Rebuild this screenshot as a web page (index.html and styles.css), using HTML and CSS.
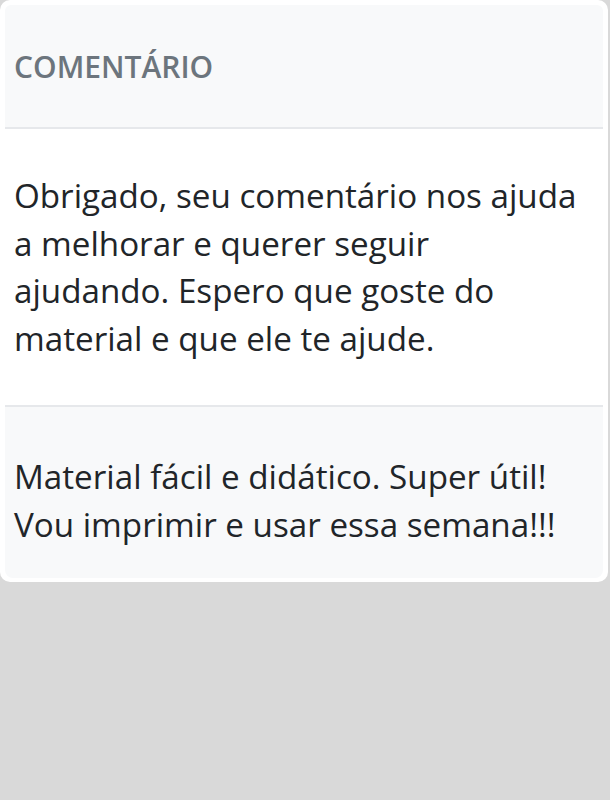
FILE: index.html
```html
<!DOCTYPE html>
<html lang="pt-BR">
<head>
<meta charset="utf-8">
<title>Comentários</title>
<link rel="stylesheet" href="styles.css">
</head>
<body>
  <section class="card">
    <div class="row row-head">Comentário</div>
    <div class="row row-body">Obrigado, seu comentário nos ajuda a melhorar e querer seguir ajudando. Espero que goste do material e que ele te ajude.</div>
    <div class="row row-alt">Material fácil e didático. Super útil! Vou imprimir e usar essa semana!!!</div>
  </section>
</body>
</html>
```

FILE: styles.css
```css
html, body {
  margin: 0;
  padding: 0;
  background: #d9d9d9;
}

body {
  width: 610px;
  height: 800px;
  font-family: "Open Sans", "Noto Sans", sans-serif;
  color: #212529;
}

.card {
  width: 608px;
  box-sizing: border-box;
  padding: 5px 5px 4px 5px;
  background: #ffffff;
  border-radius: 10px;
}

.row {
  padding: 0 20px 0 9px;
}

.row-head {
  background: #f8f9fa;
  border-radius: 6px 6px 0 0;
  border-bottom: 2px solid #e6e8eb;
  height: 122px;
  display: flex;
  align-items: center;
  font-size: 30px;
  font-weight: 600;
  text-transform: uppercase;
  color: #6c757d;
}

.row-body {
  background: #ffffff;
  border-bottom: 2px solid #e6e8eb;
  padding-top: 43px;
  padding-bottom: 43px;
  font-size: 33.2px;
  line-height: 47.5px;
}

.row-alt {
  background: #f8f9fa;
  border-radius: 0 0 8px 8px;
  padding-top: 46px;
  padding-bottom: 29px;
  font-size: 33.2px;
  line-height: 48px;
}
```
